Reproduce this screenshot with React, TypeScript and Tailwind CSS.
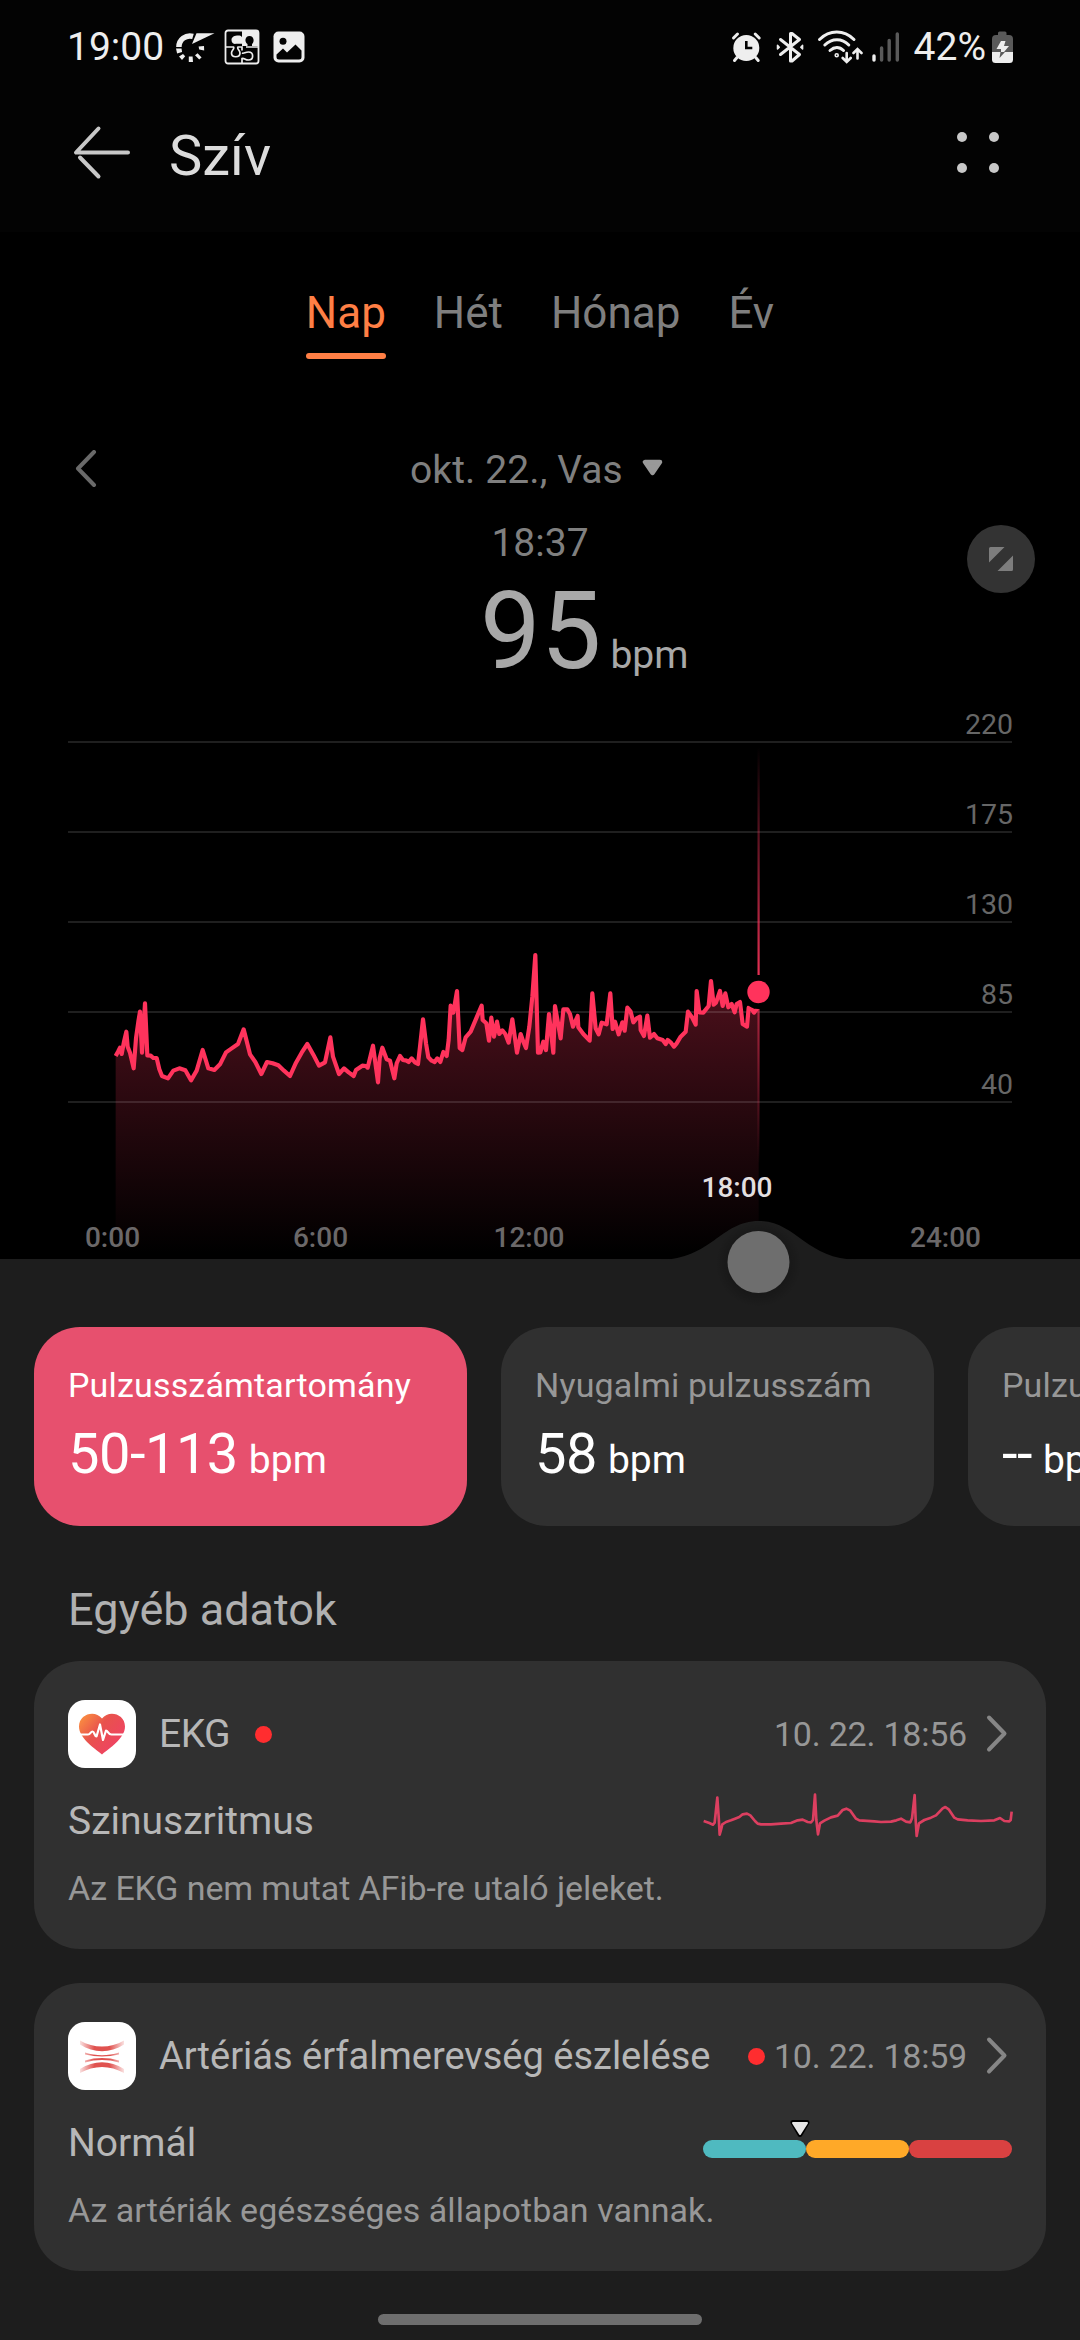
import type { ReactNode } from "react";

type StatCardProps = {
  label: string;
  value: string;
  active?: boolean;
};

type DataCardProps = {
  icon: ReactNode;
  title: string;
  titleClass: string;
  date: string;
  result: string;
  description: string;
  descriptionClass: string;
  dotClass: string;
  children: ReactNode;
};

const tabs = ["Nap", "Hét", "Hónap", "Év"];

const gridLines = [
  { label: "220", y: 60 },
  { label: "175", y: 150 },
  { label: "130", y: 240 },
  { label: "85", y: 330 },
  { label: "40", y: 420 },
];

const hours = [
  { label: "0:00", x: 112.5 },
  { label: "6:00", x: 320.5 },
  { label: "12:00", x: 529 },
  { label: "24:00", x: 945.5 },
];

// heart rate samples, drawn at three times the chart's size
const heartRate =
  "167,468 174,455 180,443 185,462 192,425 199,395 203,440 210,458 221,505 228,415 235,365 240,335 246,458 255,310 262,466 272,467 280,474 290,474 298,508 306,528 324,535 340,512 358,505 376,511 393,541 410,512 428,450 445,505 463,510 480,493 498,457 515,445 534,432 551,388 570,463 586,486 604,522 621,486 638,490 655,496 672,512 690,528 708,488 725,458 742,432 760,464 777,497 795,487 811,412 819,470 837,522 852,505 866,517 881,528 888,510 907,497 918,498 923,503 939,437 954,547 959,475 967,443 980,478 990,482 1003,535 1010,490 1020,468 1029,480 1040,482 1046,486 1055,475 1065,487 1074,492 1080,440 1089,358 1098,430 1105,472 1115,482 1124,486 1132,475 1141,486 1150,456 1160,468 1166,420 1172,317 1180,338 1191,273 1199,444 1207,450 1217,412 1232,395 1250,352 1265,317 1268,360 1279,370 1287,422 1294,353 1302,410 1311,365 1318,402 1327,391 1336,402 1346,428 1357,358 1371,458 1382,402 1390,425 1398,444 1408,380 1417,290 1426,165 1434,458 1441,457 1450,425 1458,450 1467,342 1480,458 1485,318 1502,415 1510,328 1522,328 1530,342 1539,380 1553,348 1555,382 1570,402 1589,422 1597,280 1607,385 1616,403 1625,368 1640,373 1651,280 1658,387 1665,365 1676,403 1687,367 1694,392 1702,323 1712,335 1720,367 1730,355 1740,350 1742,390 1752,408 1762,347 1770,413 1782,402 1792,415 1808,420 1817,432 1823,420 1832,427 1842,440 1850,430 1862,410 1877,395 1884,335 1895,350 1907,374 1910,273 1918,337 1930,338 1946,318 1953,243 1961,314 1968,308 1980,273 1988,318 1996,280 2005,322 2015,312 2024,337 2030,312 2040,306 2048,372 2061,380 2066,323 2075,327 2082,338 2092,325";

const ecg =
  "128,393 145,399 156,404 161,398 165,360 169,323 173,380 176,434 180,420 184,403 195,396 210,391 222,386 235,381 245,373 258,371 268,376 282,393 290,401 300,403 330,403 360,401 390,399 410,391 425,389 440,396 450,397 456,390 462,314 466,390 471,433 477,400 490,392 510,382 530,377 545,360 556,356 568,362 585,386 595,391 640,394 660,396 690,395 706,391 720,386 735,395 748,397 753,385 761,315 764,390 767,438 774,400 790,390 810,383 825,376 845,355 853,351 863,358 880,383 890,388 920,391 960,393 1000,391 1017,384 1030,393 1045,394 1049,390 1052,365";

const StatusBar = () => (
  <div className="flex h-[94px] items-center px-[67px] text-[39px] leading-none text-[#eeeeee]">
    <span>19:00</span>
    <svg className="ml-[11px] h-[36px] w-[40px]" viewBox="175 29 40 36" fill="currentColor">
      <path d="M178.9 47A11 11 0 0 1 193 36.4" fill="none" stroke="currentColor" strokeWidth="5.5" />
      <path d="M196.5 33.3H214.5L192 44Z" />
      <path d="M176 48.5h5.5l.6 3.5-5 1.5ZM179 56.5l4-2.4 2.2 2.2-3.2 3.8ZM188.8 56.5h3.8l.4 5.6h-4.2ZM195 55.2l2.6-2 4 4.2-2.4 2.2ZM198.6 46.6l5.4-.6.2 4.4-5-1Z" />
    </svg>
    <svg className="ml-[9px] h-[36px] w-[36px]" viewBox="0 0 36 36">
      <rect x="1.5" y="1.5" width="33" height="33" rx="2.5" fill="none" stroke="currentColor" strokeWidth="1.8" />
      <path d="M18 2H34V17H18Z" fill="currentColor" />
      <path d="M18 8.2c-1-1.2-2-1.6-3.6-1.6C10.5 6.6 7.5 8 7.5 11s2.5 4.3 4.5 3.8h6Z" fill="currentColor" />
      <path d="M23.5 18v-3c-3-1.5-3-8 2-8s5 6.5 2.5 8v3Z" fill="#030303" />
      <path d="M2 18h7.5c1.5 2-2 3-2 6 0 5 8.5 5 8.5 0 0-3-3.5-4-2-6H18v3.5M18 34v-4.5c2-1 3 1.5 6.5 1.5 5.5 0 5.5-8 0-8-3.5 0-4.5 2-6.5 1M22 18h12" fill="none" stroke="currentColor" strokeWidth="1.7" />
    </svg>
    <svg className="ml-[13px] h-[32px] w-[32px]" viewBox="0 0 32 32">
      <rect x=".5" y=".5" width="31" height="31" rx="5" fill="currentColor" />
      <circle cx="10" cy="10.3" r="3.5" fill="#030303" />
      <path d="M3.5 23.5 10 17.5 14 21.5 22.5 13.5 28.5 19.5V26Q28.5 28.5 26 28.5H6Q3.5 28.5 3.5 26Z" fill="#030303" />
    </svg>

    <svg className="ml-auto h-[36px] w-[32px]" viewBox="730 29 32 36">
      <circle cx="746.3" cy="48" r="13" fill="currentColor" />
      <path d="M733.5 38l4-4M759.2 38l-4-4M737 57.5l-2.5 3M755.7 57.5l2.5 3" stroke="currentColor" strokeWidth="3" strokeLinecap="round" />
      <path d="M746.3 41v7h6" fill="none" stroke="#030303" strokeWidth="2.6" />
    </svg>
    <svg className="ml-[13px] h-[36px] w-[30px]" viewBox="775 29 30 36" fill="none" stroke="currentColor" strokeWidth="3" strokeLinejoin="round" strokeLinecap="round">
      <path d="M780.5 39.5 799.5 54.5 792 61H790.5V33.5H792L799.5 39.5 780.5 54.5" />
      <path d="M777.5 45.3V49l1.8-1.8ZM802.6 45.3V49l-1.8-1.8Z" strokeWidth="1.5" fill="currentColor" />
    </svg>
    <svg className="ml-[12px] h-[36px] w-[46px]" viewBox="817 29 46 36" fill="none" stroke="currentColor" strokeWidth="3" strokeLinecap="round">
      <path d="M819.5 39.5C829.5 29.5 844 29.5 854 39.5M824.8 45C832 38 842 38 848.8 45M830 50.5C834.5 46.5 839.5 46.5 843.5 50.5" />
      <circle cx="836.7" cy="55.3" r=".8" />
      <path d="M846.7 53v8M842.7 58l4 4 4-4M857.5 58.5v-9M853.5 53l4-4 4 4" strokeWidth="2.6" />
    </svg>
    <svg className="ml-[8px] h-[36px] w-[30px]" viewBox="871 29 30 36" fill="none" strokeWidth="3.4" strokeLinecap="round">
      <path d="M874 56v4" stroke="currentColor" />
      <path d="M881.6 48v12M889.2 40.5v19.5M897.3 34v26" stroke="#5a5a5a" />
    </svg>
    <span className="ml-[13px]">42%</span>
    <svg className="ml-[5px] h-[36px] w-[22px]" viewBox="991 29 22 36">
      <path d="M998 33q0-1.5 1.5-1.5h5.5q1.5 0 1.5 1.5v2H1009q4 0 4 4V52.5H992V39q0-4 4-4h2Z" fill="#5a5a5a" />
      <path d="M992 52H1013V59.5Q1013 63 1009.5 63H995.5Q992 63 992 59.5Z" fill="currentColor" />
      <path d="M1001 41h4.5l-1.5 5h5L1004 52h-3v-3h-4.5Z" fill="currentColor" />
      <path d="M1000.5 52h4.5l-5.5 6Z" fill="#5a5a5a" />
    </svg>
  </div>
);

const Header = () => (
  <header className="h-[232px] shrink-0 bg-[#030303]">
    <StatusBar />
    <div className="flex h-[120px] items-center pl-[72px] pr-[80px]">
      <svg className="h-[60px] w-[60px]" viewBox="0 0 60 60" fill="none" stroke="#c8c8c8" strokeWidth="4" strokeLinecap="round">
        <path d="M26.5 4.5 4 28.5H56M8 33.5 26.5 52.5" strokeLinejoin="round" />
      </svg>
      <h1 className="ml-[37px] mt-1 text-[56px] leading-none text-[#dcdcdc]">Szív</h1>
      <div className="mb-[3px] ml-auto grid grid-cols-2 gap-x-[22px] gap-y-[21px] pr-px">
        <span className="size-[10px] rounded-full bg-[#c8c8c8]" />
        <span className="size-[10px] rounded-full bg-[#c8c8c8]" />
        <span className="size-[10px] rounded-full bg-[#c8c8c8]" />
        <span className="size-[10px] rounded-full bg-[#c8c8c8]" />
      </div>
    </div>
  </header>
);

const Tabs = () => (
  <nav className="flex shrink-0 justify-center gap-12 pt-[55px] text-[44px] leading-[52px] text-[#7f7f7f]">
    {tabs.map((tab, i) => (
      <div key={tab} className={i === 0 ? "text-[#ff7f45]" : ""}>
        {tab}
        <div className={i === 0 ? "mt-[14px] h-[6px] rounded-full bg-[#ff7f45]" : "mt-[14px] h-[6px]"} />
      </div>
    ))}
  </nav>
);

const Reading = () => (
  <section className="relative mt-[81px] h-[241px] shrink-0 text-[39px] text-[#7f7f7f]">
    <div className="flex h-[60px] items-center pl-[74px]">
      <svg className="h-[40px] w-[24px]" viewBox="0 0 24 40" fill="none" stroke="#6a6a6a" strokeWidth="4" strokeLinecap="round" strokeLinejoin="round">
        <path d="M20 2 4 18.5 20 35" />
      </svg>
      <span className="ml-[312px] tracking-[0.1px]">okt. 22., Vas</span>
      <svg className="mb-[5px] ml-[19px] h-[17px] w-[21px]" viewBox="0 0 21 17">
        <path d="M3 3H18L10.5 14Z" fill="#999999" stroke="#999999" strokeWidth="4.5" strokeLinejoin="round" />
      </svg>
    </div>
    <div className="mt-[13px] text-center leading-[60px]">18:37</div>
    <div className="mt-2 flex items-baseline pl-[480px] text-[#a8a8a8]">
      <span className="text-[108px] leading-[100px]">95</span>
      <span className="ml-[9px] leading-none">bpm</span>
    </div>
    <button className="absolute right-[45px] top-[85px] flex size-[68px] items-center justify-center rounded-full bg-[#333333]">
      <svg className="size-[28px]" viewBox="0 0 28 28" fill="#7d7d7d">
        <path d="M3.5 2H17.5L2 17.5V3.5Q2 2 3.5 2ZM26 10.5V24.5Q26 26 24.5 26H10.5Z" />
      </svg>
    </button>
  </section>
);

const HeartRateChart = () => (
  <svg className="relative h-[578px] w-full shrink-0 overflow-visible" viewBox="0 0 1080 578">
    <defs>
      <linearGradient id="area" gradientUnits="userSpaceOnUse" x1="0" y1="150" x2="0" y2="1060">
        <stop offset="0" stopColor="#ff355c" stopOpacity=".34" />
        <stop offset=".5" stopColor="#ff355c" stopOpacity=".165" />
        <stop offset="1" stopColor="#ff355c" stopOpacity="0" />
      </linearGradient>
      <linearGradient id="lineTop" x1="0" y1="0" x2="0" y2="1">
        <stop offset="0" stopColor="#ff355c" stopOpacity="0" />
        <stop offset="1" stopColor="#ff355c" stopOpacity=".9" />
      </linearGradient>
      <linearGradient id="lineBottom" x1="0" y1="0" x2="0" y2="1">
        <stop offset="0" stopColor="#ff355c" stopOpacity=".6" />
        <stop offset="1" stopColor="#ff355c" stopOpacity="0" />
      </linearGradient>
      <radialGradient id="knobShadow">
        <stop offset=".65" stopColor="#000" stopOpacity=".35" />
        <stop offset="1" stopColor="#000" stopOpacity="0" />
      </radialGradient>
    </defs>

    <g transform="translate(60 219) scale(.33333)">
      <polygon points={`167,1077 ${heartRate} 2096,325 2096,1077`} fill="url(#area)" />
    </g>
    {gridLines.map((line) => (
      <g key={line.label}>
        <rect x="68" y={line.y} width="944" height="2" fill="#ffffff" fillOpacity=".12" />
        <text x="1013" y={line.y - 7} textAnchor="end" fontSize="28.5" fill="#666666">
          {line.label}
        </text>
      </g>
    ))}
    <g transform="translate(60 219) scale(.33333)">
      <polyline points={heartRate} fill="none" stroke="#ff335c" strokeWidth="12.5" strokeLinejoin="round" />
    </g>

    {/* selected time */}
    <circle cx="758.5" cy="311" r="17" fill="#000000" />
    <rect x="757.5" y="66" width="2.2" height="228" fill="url(#lineTop)" />
    <rect x="757.5" y="328" width="2.2" height="155" fill="url(#lineBottom)" />
    <circle cx="758.5" cy="311" r="11.2" fill="#ff335c" />

    <path d="M655 579H660C711 578 721 540 758.5 540C796 540 806 578 857 579H862Z" fill="#1d1d1d" />
    <circle cx="758.5" cy="583" r="43" fill="url(#knobShadow)" opacity=".6" />
    <circle cx="758.5" cy="581" r="31" fill="#6e6e6e" />

    <g fontSize="28" fontWeight="500" textAnchor="middle" fill="#6b6869">
      {hours.map((hour) => (
        <text key={hour.label} x={hour.x} y="566">
          {hour.label}
        </text>
      ))}
      <text x="737" y="516" fill="#e2dfe0">18:00</text>
    </g>
  </svg>
);

const StatCard = ({ label, value, active }: StatCardProps) => (
  <div
    className={
      active
        ? "h-[199px] w-[433px] shrink-0 rounded-[46px] bg-[#e7506e] px-[34px] pt-[36px] text-white"
        : "h-[199px] w-[433px] shrink-0 rounded-[46px] bg-[#303030] px-[34px] pt-[36px] text-[#979797]"
    }
  >
    <div className="whitespace-nowrap text-[34px] leading-[44px] tracking-[0.17px]">{label}</div>
    <div className="mt-[14px] flex items-baseline leading-[66px] text-white">
      <span className="text-[56px] tracking-[-0.5px]">{value}</span>
      <span className="ml-[11px] text-[39px]">bpm</span>
    </div>
  </div>
);

const EcgIcon = () => (
  <svg className="size-[68px] shrink-0 rounded-[17px] bg-white" viewBox="0 0 68 68">
    <defs>
      <linearGradient id="heart" x1="0" y1=".1" x2=".8" y2=".7">
        <stop offset="0" stopColor="#fb9040" />
        <stop offset=".5" stopColor="#e8524d" />
        <stop offset="1" stopColor="#ee4560" />
      </linearGradient>
    </defs>
    <path d="M34 54.5C27 48.5 11 38.5 11 26.5C11 14 27 9.5 34 18.5C41 9.5 57 14 57 26.5C57 38.5 41 48.5 34 54.5Z" fill="url(#heart)" />
    <path d="M11 34.5H20C22.5 34.5 22.5 31.5 24.5 31.5C26.5 31.5 26.5 36.5 28.5 36.5L32 24.5 35 40 38 30.5C40 30.5 40 34.5 43.5 34.5H57" fill="none" stroke="#ffffff" strokeWidth="2.2" strokeLinejoin="round" />
  </svg>
);

const ArteryIcon = () => (
  <svg className="size-[68px] shrink-0 rounded-[17px] bg-white" viewBox="0 0 68 68">
    <defs>
      <linearGradient id="artery" gradientUnits="userSpaceOnUse" x1="9" y1="0" x2="59" y2="0">
        <stop offset="0" stopColor="#e0524f" stopOpacity="0" />
        <stop offset=".35" stopColor="#e0524f" />
        <stop offset=".65" stopColor="#e0524f" />
        <stop offset="1" stopColor="#e0524f" stopOpacity="0" />
      </linearGradient>
    </defs>
    <g fill="url(#artery)">
      <path d="M12 18.5C26 26.5 42 26.5 56 18.5V22.5C42 31.5 26 31.5 12 22.5Z" />
      <path d="M17 30.5C28 34 40 34 51 30.5V32.5C40 35 28 35 17 32.5Z" />
      <path d="M17 38.5C28 35.2 40 35.2 51 38.5V40.5C40 37.2 28 37.2 17 40.5Z" />
      <path d="M12 51C26 43 42 43 56 51V47C42 38 26 38 12 47Z" />
    </g>
  </svg>
);

const DataCard = ({ icon, title, titleClass, date, result, description, descriptionClass, dotClass, children }: DataCardProps) => (
  <article className="h-[288px] rounded-[46px] bg-[#303030] px-[34px] pt-[39px] text-[#b7b7b7]">
    <div className="flex h-[68px] items-center whitespace-nowrap">
      {icon}
      <span className={titleClass}>{title}</span>
      <span className={dotClass} />
      <span className="ml-auto text-[34px] leading-[44px] tracking-[-0.22px] text-[#979797]">{date}</span>
      <svg className="ml-[19px] mr-1 h-[40px] w-[22px] shrink-0" viewBox="0 0 22 40" fill="none" stroke="#868686" strokeWidth="4" strokeLinecap="round" strokeLinejoin="round">
        <path d="M3 3.5 18.5 19.500 3 35.5" />
      </svg>
    </div>
    <div className="mt-[29px] flex h-12 items-center justify-between">
      <span className="text-[39px] leading-[48px]">{result}</span>
      {children}
    </div>
    <p className={descriptionClass}>{description}</p>
  </article>
);

const Gauge = () => (
  <div className="relative flex h-12 w-[309px] items-center pt-[12px]">
    <span className="h-[18px] flex-1 rounded-full bg-[#4fbac0]" />
    <span className="h-[18px] flex-1 rounded-full bg-[#ffa928]" />
    <span className="h-[18px] flex-1 rounded-full bg-[#d94141]" />
    <svg className="absolute left-[86px] top-px h-[18px] w-[22px]" viewBox="0 0 22 18">
      <path d="M4 2.5H18L11 14.5Z" fill="#000" stroke="#000" strokeWidth="5" strokeLinejoin="round" />
      <path d="M4 3H18L11 14Z" fill="#e6e6e6" stroke="#e6e6e6" strokeWidth="2" strokeLinejoin="round" />
    </svg>
  </div>
);

export default function App() {
  return (
    <div className="flex h-[2340px] w-[1080px] flex-col overflow-hidden bg-black font-['Roboto',sans-serif]">
      <Header />
      <Tabs />
      <Reading />
      <HeartRateChart />
      <main className="flex-1 bg-[#1d1d1d] px-[34px] pt-[68px]">
        <div className="flex gap-[34px]">
          <StatCard label="Pulzusszámtartomány" value="50-113" active />
          <StatCard label="Nyugalmi pulzusszám" value="58" />
          <StatCard label="Pulzusszám" value="--" />
        </div>
        <h2 className="mt-[54px] pl-[34px] text-[45px] leading-[60px] text-[#b0b0b0]">Egyéb adatok</h2>
        <div className="mt-[21px] flex flex-col gap-[34px]">
          <DataCard
            icon={<EcgIcon />}
            title="EKG"
            titleClass="ml-[23px] text-[39px] leading-[48px] tracking-[-0.5px]"
            date="10. 22. 18:56"
            result="Szinuszritmus"
            description="Az EKG nem mutat AFib-re utaló jeleket."
            descriptionClass="mt-[21px] text-[34px] leading-[44px] tracking-[-0.1px] text-[#979797]"
            dotClass="ml-[25px] size-[17px] shrink-0 rounded-full bg-[#ff2d2f]"
          >
            <svg className="h-12 w-[308px] overflow-visible" viewBox="129 321 924 144">
              <polyline points={ecg} fill="none" stroke="#dc3f60" strokeWidth="8" strokeLinejoin="round" />
            </svg>
          </DataCard>
          <DataCard
            icon={<ArteryIcon />}
            title="Artériás érfalmerevség észlelése"
            titleClass="ml-[23px] text-[38px] leading-[48px]"
            date="10. 22. 18:59"
            result="Normál"
            description="Az artériák egészséges állapotban vannak."
            descriptionClass="mt-[21px] text-[34px] leading-[44px] tracking-[0.04px] text-[#979797]"
            dotClass="ml-[38px] size-[17px] shrink-0 rounded-full bg-[#ff2d2f]"
          >
            <Gauge />
          </DataCard>
        </div>
        <div className="mx-auto mt-[43px] h-[11px] w-[324px] rounded-full bg-[#6e6e6e]" />
      </main>
    </div>
  );
}
